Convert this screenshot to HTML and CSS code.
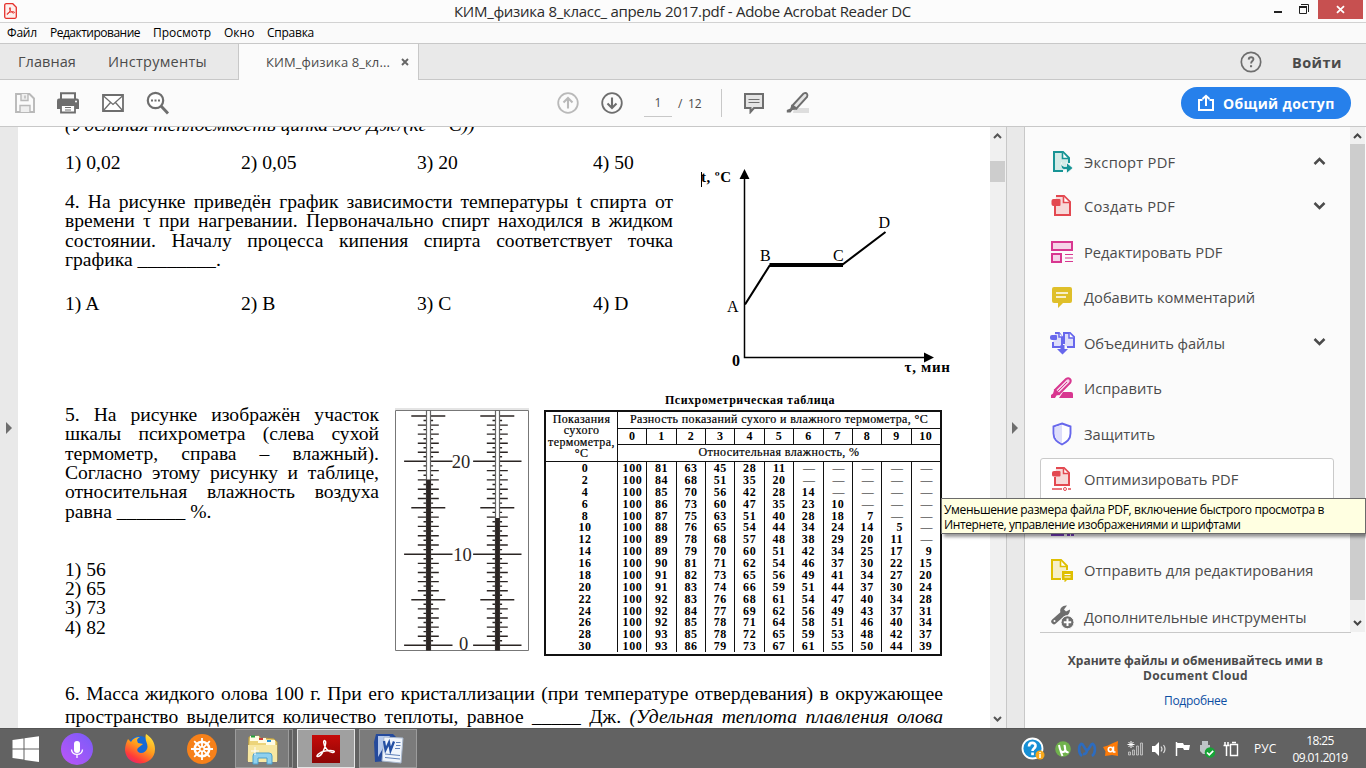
FILE: index.html
```html
<!DOCTYPE html>
<html lang="ru">
<head>
<meta charset="utf-8">
<title>КИМ_физика 8_класс_ апрель 2017.pdf - Adobe Acrobat Reader DC</title>
<link rel="stylesheet" href="styles.css">
</head>
<body>
<div class="screen">
  <header class="titlebar">
    <svg class="app-icon" width="13" height="16" viewBox="0 0 13 16"><path d="M2.500.7h6.300l3.500 3.500v9.600a1.500 1.500 0 0 1-1.500 1.500H2.200A1.500 1.500 0 0 1 .7 13.800V2.200A1.500 1.500 0 0 1 2.500.7z" fill="#fdf0ee" stroke="#e5322d" stroke-width="1.300"/><path d="M3 11.300c-.8-.8 3-2.600 6-2.600 2.500 0 1.500 1.800 0 1.300-2-.8-4-4-3.300-5.200.8-.8 1.300.7.300 3C5.200 9.500 4 11.800 3 11.300z" fill="none" stroke="#e5322d" stroke-width="1"/></svg>
    <span class="title">КИМ_физика 8_класс_ апрель 2017.pdf - Adobe Acrobat Reader DC</span>
    <div class="window-buttons">
      <svg width="8" height="19" viewBox="0 0 8 19"><path d="M0 12h8" stroke="#222" stroke-width="2"/></svg>
      <svg width="11" height="19" viewBox="0 0 11 19"><path d="M.5 6.500h7v7h-7z" fill="none" stroke="#222"/><path d="M0 7h8" stroke="#222" stroke-width="2"/><path d="M2 4.500h7.500V12" fill="none" stroke="#222"/></svg>
      <div class="close"><svg width="9" height="9" viewBox="0 0 9 9"><path d="M1 1.200l7 6.600M8 1.200L1 7.800" stroke="#fff" stroke-width="1.800"/></svg></div>
    </div>
  </header>
  <nav class="menubar">
    <span class="m1">Файл</span><span class="m2">Редактирование</span><span class="m3">Просмотр</span><span class="m4">Окно</span><span class="m5">Справка</span>
  </nav>
  <nav class="tabs">
    <span class="tab-home">Главная</span>
    <span class="tab-tools">Инструменты</span>
    <div class="tab-active"><span>КИМ_физика 8_кл...</span><svg width="8" height="8" viewBox="0 0 8 8"><path d="M1 1l6 6M7 1L1 7" stroke="#666" stroke-width="1.900"/></svg></div>
    <div class="tabs-right">
      <svg width="22" height="22" viewBox="0 0 22 22"><circle cx="11" cy="11" r="9.700" fill="none" stroke="#6e6e6e" stroke-width="1.700"/><path d="M8.700 8.600c.1-3.200 5-3 4.700-.2-.2 1.600-2.300 1.800-2.300 4" fill="none" stroke="#6e6e6e" stroke-width="1.900"/><path d="M10 14.200h2.100v2H10z" fill="#6e6e6e"/></svg>
      <b>Войти</b>
    </div>
  </nav>
  <div class="toolbar">
    <div class="tools-left">
      <svg width="22" height="22" viewBox="0 0 22 22"><path d="M2 2h13.500L20 6.500V20H2z" fill="none" stroke="#b9b9b9" stroke-width="1.900"/><path d="M7 2v6.500h7V2M6 20v-6.500h10V20" fill="#efefef" stroke="#b9b9b9" stroke-width="1.400"/><path d="M11 3.500v3" stroke="#b9b9b9" stroke-width="1.500"/></svg>
      <svg width="24" height="22" viewBox="0 0 24 22"><path d="M5 7V1.300h14V7" fill="none" stroke="#6e6e6e" stroke-width="2"/><path d="M3 6.500h18q2 0 2 2V17H1V8.500q0-2 2-2z" fill="#6e6e6e"/><circle cx="20" cy="9.500" r="1" fill="#fff"/><path d="M5 13h14v7.500H5z" fill="#fff" stroke="#6e6e6e" stroke-width="1.800"/><path d="M9 15.500h6M9 18h6" stroke="#6e6e6e"/></svg>
      <svg width="22" height="22" viewBox="0 0 22 22"><path d="M1 3h20v16H1z" fill="#fff" stroke="#6e6e6e" stroke-width="1.800"/><path d="M1 3.500l10 9 10-9M1.500 18.500l7-8M20.500 18.500l-7-8" fill="none" stroke="#6e6e6e" stroke-width="1.300"/></svg>
      <svg width="24" height="24" viewBox="0 0 24 24"><circle cx="9.500" cy="9.500" r="7.700" fill="#fff" stroke="#6e6e6e" stroke-width="2.200"/><path d="M15 15l7 7.500" stroke="#6e6e6e" stroke-width="2.900"/><path d="M5 9.500h9" stroke="#6e6e6e" stroke-width="1.900" stroke-dasharray="2 1.500"/></svg>
    </div>
    <div class="tools-mid">
      <svg width="22" height="22" viewBox="0 0 22 22"><circle cx="11" cy="11" r="9.800" fill="none" stroke="#b9b9b9" stroke-width="1.800"/><path d="M11 16.500V6M6.500 10.500L11 6l4.500 4.500" fill="none" stroke="#b9b9b9" stroke-width="2.100"/></svg>
      <svg width="22" height="22" viewBox="0 0 22 22"><circle cx="11" cy="11" r="9.800" fill="none" stroke="#6e6e6e" stroke-width="1.800"/><path d="M11 5.500V16M6.500 11.500L11 16l4.500-4.500" fill="none" stroke="#6e6e6e" stroke-width="2.100"/></svg>
      <span class="page-no">1</span><span class="page-total">/&nbsp; 12</span>
      <i class="divider"></i>
      <svg width="22" height="22" viewBox="0 0 22 22"><path d="M2 2h18v14h-9l-3.500 4v-4H2z" fill="#e4e4e4" stroke="#6e6e6e" stroke-width="2"/><path d="M5.500 7.500h11M5.500 10.500h11" stroke="#6e6e6e"/></svg>
      <svg width="24" height="24" viewBox="0 0 24 24"><path d="M8 17h15v5H7z" fill="#dedede"/><path d="M6.500 14.500L17.500 2.500c3-1.500 4.800.5 3.500 3.500L10.500 17.500z" fill="#e4e4e4" stroke="#6e6e6e" stroke-width="1.900"/><path d="M5.500 13.500l6 5-5 .5-2 2.500H.8v-2.500l3.500-1.500z" fill="#6e6e6e"/></svg>
    </div>
    <button class="share"><svg width="18" height="18" viewBox="0 0 18 18"><path d="M5.500 6H2v10h14V6h-3.500M9 12V2M5.500 5L9 1.800 12.500 5" fill="none" stroke="#fff" stroke-width="2"/></svg>Общий доступ</button>
  </div>

  <main class="workspace">
    <div class="left-rail"><i class="tri"></i></div>
    <article class="page">
      <div class="cut"><i>(Удельная теплоёмкость цинка 380 Дж/(кг · °С))</i></div>
      <section class="part-a">
        <div class="text-a">
          <div class="answers"><span>1) 0,02</span><span>2) 0,05</span><span>3) 20</span><span>4) 50</span></div>
          <div class="q4">
            <p>4. На рисунке приведён график зависимости температуры t спирта от</p>
            <p>времени τ при нагревании. Первоначально спирт находился в жидком</p>
            <p>состоянии. Началу процесса кипения спирта соответствует точка</p>
            <p class="last">графика ________.</p>
          </div>
          <div class="answers"><span>1) A</span><span>2) B</span><span>3) C</span><span>4) D</span></div>
        </div>
        <svg class="graph" width="265" height="225" viewBox="695 160 265 225">
          <path d="M744.500 176V357.500H926" fill="none" stroke="#000" stroke-width="1.500"/>
          <path d="M744.500 169l5 10h-10zM934 357.500l-10-5v10z"/>
          <path d="M745 304.500l25-39.500M842 265l43.500-33" fill="none" stroke="#000" stroke-width="2.100"/>
          <path d="M769.500 265H843" stroke="#000" stroke-width="3.800"/>
          <path d="M701.500 172v15" stroke="#000"/>
          <g class="graph-text"><text x="701" y="182" class="bold label-t" textLength="30">t, ºC</text><text x="727" y="312">A</text><text x="760" y="261">B</text><text x="833" y="261">C</text><text x="878.500" y="228">D</text><text x="732" y="366" class="bold">0</text><text x="904.500" y="372" class="bold small" textLength="45.500">τ, мин</text></g>
        </svg>
      </section>
      <section class="part-b">
        <div class="text-b">
          <div class="q5">
            <p>5. На рисунке изображён участок</p>
            <p>шкалы психрометра (слева сухой</p>
            <p>термометр, справа – влажный).</p>
            <p>Согласно этому рисунку и таблице,</p>
            <p>относительная влажность воздуха</p>
            <p class="last">равна _______ %.</p>
          </div>
          <div class="list"><p class="last">1) 56</p><p class="last">2) 65</p><p class="last">3) 73</p><p class="last">4) 82</p></div>
        </div>
        <svg class="thermo" width="135" height="243" viewBox="395 408 135 243">
          <path d="M395 409h134" stroke="#e4e4e4" stroke-width="2"/>
          <path d="M395.500 410.500h133v240h-133z" fill="#fff" stroke="#777"/>
          <path id="ticks" stroke="#2b2523" stroke-width="1.400"/>
          <path d="M426.500 410.500h4v240h-4zM495.500 410.500h4v240h-4z" fill="#fff" stroke="#666" stroke-width="1.200"/>
          <path d="M428.500 479.500V650.500M497.500 518V650.500" stroke="#2b2523" stroke-width="4.600"/>
          <g class="thermo-text"><text x="461" y="467.500">20</text><text x="462.500" y="560.500">10</text><text x="463.500" y="649.500">0</text></g>
        </svg>
        <div class="psychro">
          <b class="caption">Психрометрическая таблица</b>
          <div class="table">
            <div class="row-head">Показания<br>сухого<br>термометра,<br>°C</div>
            <div class="col-head">Разность показаний сухого и влажного термометра, °C</div>
            <div class="diffs" id="diffs"></div>
            <div class="humidity">Относительная влажность, %</div>
            <div class="body" id="cells"></div>
          </div>
        </div>
      </section>
      <section class="q6">
        <p>6. Масса жидкого олова 100 г. При его кристаллизации (при температуре отвердевания) в окружающее</p>
        <p>пространство выделится количество теплоты, равное _____ Дж. <i>(Удельная теплота плавления олова</i></p>
      </section>
    </article>
    <div class="doc-scroll">
      <svg width="9" height="6" viewBox="0 0 9 6"><path d="M1 5l3.500-3.500L8 5" fill="none" stroke="#555" stroke-width="2"/></svg>
      <i></i>
      <svg width="9" height="6" viewBox="0 0 9 6"><path d="M1 1l3.500 3.500L8 1" fill="none" stroke="#555" stroke-width="2"/></svg>
    </div>
    <div class="right-rail"><i class="tri"></i></div>
    <aside class="panel">
      <div class="panel-top">
        <ul class="tool-list">
          <li><svg width="24" height="24" viewBox="0 0 24 24"><path d="M13 21H4V2h9l6 6v5" fill="#d3ebe7" stroke="#179495" stroke-width="2"/><path d="M12.500 2.500V8.500H18" fill="#fff" stroke="#179495" stroke-width="1.600"/><path d="M11.500 12.500c0 3 1.500 4 4 4h1v-4l6.500 5.500-6.500 5.500v-4h-2c-3 0-4-3-3-7z" fill="#179495" stroke="#fbfbfb" stroke-width=".8"/></svg><span class="sp-wide">Экспорт PDF</span><svg class="chev" width="13" height="9" viewBox="0 0 13 9"><path d="M1.500 7l5-5 5 5" fill="none" stroke="#4b4b4b" stroke-width="2.500"/></svg></li>
          <li><svg width="24" height="24" viewBox="0 0 24 24"><path d="M5 12v9h15V8l-6-6H6" fill="#f7d8d8" stroke="#e34850" stroke-width="2"/><path d="M13.500 2.500V8.500h6" fill="#fff" stroke="#e34850" stroke-width="1.600"/><path d="M3.500 5h6q1 0 1 1v5q0 1-1 1h-6q-2 0-2-2V7q0-2 2-2z" fill="#e34850"/></svg><span class="sp-wide">Создать PDF</span><svg class="chev" width="13" height="9" viewBox="0 0 13 9"><path d="M1.500 2l5 5 5-5" fill="none" stroke="#4b4b4b" stroke-width="2.500"/></svg></li>
          <li><svg width="24" height="24" viewBox="0 0 24 24"><path d="M2 2h20v8H2zM2 14h9v8H2z" fill="#f6d3e8" stroke="#d83790" stroke-width="2"/><path d="M15 14.500h8M15 18h8M15 21.500h8" stroke="#d83790" stroke-width="1.100"/></svg><span>Редактировать PDF</span></li>
          <li><svg width="24" height="24" viewBox="0 0 24 24"><path d="M4 2h16q2 0 2 2v12q0 2-2 2h-7l-5 5v-5H4q-2 0-2-2V4q0-2 2-2z" fill="#dfbf2a"/><path d="M6 8h12M6 12h10" stroke="#fff" stroke-width="1.400"/></svg><span>Добавить комментарий</span></li>
          <li><svg width="26" height="24" viewBox="0 0 26 24"><path d="M3 11v5h6V16H12V6L9 2H5M14 13V2h6l4 4v10h-7" fill="#dedefa" stroke="#6767ec" stroke-width="2"/><path d="M9 2v4h4M19 2v5h5" fill="#fff" stroke="#6767ec" stroke-width="1.500"/><path d="M2 4h4q1 0 1 1v3q0 1-1 1H2Q0 9 0 7V6q0-2 2-2zM10.500 14h4v4h3.500l-5.500 5.500L7 18h3.500z" fill="#6767ec"/></svg><span class="sp-tight">Объединить файлы</span><svg class="chev" width="13" height="9" viewBox="0 0 13 9"><path d="M1.500 2l5 5 5-5" fill="none" stroke="#4b4b4b" stroke-width="2.500"/></svg></li>
          <li><svg width="24" height="24" viewBox="0 0 24 24"><path d="M13 16h8q2 0 2 2v4H9z" fill="#d83790"/><path d="M5 14L16 3c3-2 6 .5 4 4L9 18z" fill="#f6d3e8" stroke="#d83790" stroke-width="2"/><path d="M8 15L17 6" stroke="#d83790"/><path d="M4.500 13l6 5.500-4 1L5 22H1v-3l2-1.500z" fill="#d83790"/></svg><span>Исправить</span></li>
          <li><svg width="24" height="24" viewBox="0 0 24 24"><path d="M12 1.500l8.500 3v7c0 6-4 8.500-8.500 11-4.500-2.500-8.500-5-8.500-11v-7z" fill="#fff" stroke="#6767ec" stroke-width="1.900"/><path d="M12 3v18c-4-2-7-4-7-9V5z" fill="#dedefa"/></svg><span>Защитить</span></li>
          <li class="hovered"><svg width="24" height="24" viewBox="0 0 24 24"><path d="M5 10v8h14V6l-5-5H6" fill="#f7d8d8" stroke="#e34850" stroke-width="2"/><path d="M13.500 1.500v5h5" fill="#fff" stroke="#e34850" stroke-width="1.500"/><path d="M4 4h5.500q1 0 1 1v3.500q0 1-1 1H4q-2 0-2-1.500V5.500Q2 4 4 4z" fill="#e34850"/><path d="M2 22h10M18 22h3" stroke="#e34850" stroke-width="1.600"/><circle cx="15" cy="22" r="1.500" fill="none" stroke="#e34850"/></svg><span>Оптимизировать PDF</span></li>
          <li><svg width="24" height="24" viewBox="0 0 24 24"><path d="M1 20h13v3H1zM17 20h3v3h-3zM21 20h3v3h-3z" fill="#7c3fc4"/></svg></li>
          <li><svg width="24" height="24" viewBox="0 0 24 24"><path d="M11 21H2V2h9l6 6v4" fill="#f6efc8" stroke="#dfbf00" stroke-width="2"/><path d="M10.500 2.500V8.500H16" fill="#fff" stroke="#dfbf00" stroke-width="1.600"/><path d="M12 13h11v9h-6l-2.500 2.500V22H12z" fill="#dfbf00"/><path d="M14.500 16.500h6M14.500 19h6" stroke="#fff" stroke-width="1.200"/></svg><span>Отправить для редактирования</span></li>
          <li><svg width="26" height="24" viewBox="0 0 26 24"><path d="M4 16.500L12.500 9" stroke="#6e6e6e" stroke-width="5.500" stroke-linecap="round"/><path d="M17 .5c-4-.5-8 2.500-6.500 7l3 3c4 1 6.500-2 6.500-6l-4 2-2-2z" fill="#6e6e6e"/><circle cx="4.500" cy="16" r="1" fill="#fff"/><circle cx="17.500" cy="17.300" r="6.500" fill="#6e6e6e" stroke="#fbfbfb" stroke-width="1"/><path d="M17.500 13.600v7.400M13.800 17.300h7.400" stroke="#fff" stroke-width="2"/></svg><span class="sp-last">Дополнительные инструменты</span></li>
        </ul>
        <div class="panel-scroll">
          <svg width="9" height="6" viewBox="0 0 9 6"><path d="M1 5l3.500-3.500L8 5" fill="none" stroke="#444" stroke-width="2"/></svg>
          <i></i>
          <svg width="9" height="6" viewBox="0 0 9 6"><path d="M1 1l3.500 3.500L8 1" fill="none" stroke="#444" stroke-width="2"/></svg>
        </div>
      </div>
      <div class="cloud">
        <b>Храните файлы и обменивайтесь ими в</b><b class="cloud-name">Document Cloud</b>
        <a>Подробнее</a>
      </div>
    </aside>
  </main>

  <footer class="taskbar">
    <svg class="start" width="28" height="26" viewBox="0 0 28 26"><path d="M.500 4l11-1.500V12.500H.500zM12.500 2.300L27 .3v12.200H12.500zM.500 13.500h11v10L.500 22zM12.500 13.500H27V26l-14.500-2z" fill="#fff"/></svg>
    <svg class="mic" width="32" height="32" viewBox="0 0 32 32"><defs><linearGradient id="mg" x2="1" y1="1" y2="0"><stop stop-color="#bd55f8"/><stop offset="1" stop-color="#775cf8"/></linearGradient></defs><circle cx="16" cy="16" r="16" fill="url(#mg)"/><rect x="13" y="8" width="6" height="12" rx="3" fill="#fff"/><path d="M10.500 16.500c.5 6.500 10.500 6.500 11 0M16 21.500v3.500" fill="none" stroke="#fff" stroke-width="1.300"/></svg>
    <svg class="fox" width="32" height="32" viewBox="0 0 32 32"><defs><linearGradient id="fg" x1=".8" x2=".2" y2="1"><stop stop-color="#ffe43a"/><stop offset=".45" stop-color="#ff9a1c"/><stop offset=".8" stop-color="#ff3a3a"/><stop offset="1" stop-color="#e02378"/></linearGradient></defs><circle cx="15.500" cy="15" r="12" fill="#176ad5"/><path d="M4 6l3 3c2-4 6-5 9-5-4 2-3 4-2 6l5 1-5 4c-2 2 0 5 3 5 3 0 5-2 6-4 2-5-3-8-1-15 5 3 9 8 9 15C31 35 2 35 1 17c0-4 1-7 3-11z" fill="url(#fg)"/></svg>
    <svg class="wheel" width="30" height="30" viewBox="0 0 30 30"><circle cx="15" cy="15" r="15" fill="#f7811a"/><g fill="none" stroke="#fff"><circle cx="15" cy="15" r="7.300" stroke-width="2.500"/><path d="M15 4v22M4 15h22M7.200 7.200l15.600 15.600M22.800 7.200L7.200 22.800" stroke-width="1.800"/></g><circle cx="15" cy="15" r="3" fill="#fff"/><circle cx="15" cy="15" r="1.500" fill="#f7811a"/></svg>
    <div class="task explorer"><svg width="34" height="32" viewBox="0 0 34 32"><path d="M4 4l10-1 2 3 3-1 10 1 3 3v19H3z" fill="#ecd47b" stroke="#bd9f43"/><path d="M5 3h9v5H5zM13 5h8v5h-8zM21 7h9v5h-9z" fill="#fffbe3"/><path d="M6 2.500h4v2H6z" fill="#24a33b"/><path d="M14 5h4v2h-4z" fill="#d03b32"/><path d="M22 7h4v2h-4z" fill="#2895d8"/><path d="M3 12h29v17H3z" fill="#f7e7a2"/><path d="M8 31V23q0-3 3-3h13q3 0 3 3v8h-5v-6H13v6z" fill="#8fd0ee" stroke="#4b9fcc"/><path d="M10 14v8M6 18h8" stroke="#fff"/></svg></div>
    <div class="stack"></div>
    <div class="task acro"><svg width="28" height="28" viewBox="0 0 28 28"><defs><linearGradient id="ag" x2="0" y2="1"><stop stop-color="#c60b09"/><stop offset="1" stop-color="#8c0505"/></linearGradient></defs><path d="M0 0h28v28H0z" fill="url(#ag)"/><path d="M6 21.500C3 22 7 17 13 16c9-1.800 11 1 8 1.500-4 .5-9-5-9.300-10-.1-3 2.300-2.200 2 .5C13.400 12 10 21 6 21.500z" fill="none" stroke="#fff" stroke-width="1.500"/></svg></div>
    <div class="task word"><svg width="32" height="32" viewBox="0 0 32 32"><path d="M4 1h17l4 4v22l-22 2-1-20z" fill="#254a9c"/><path d="M6 3h12L6 24z" fill="#b5c9ed"/><path d="M12 4l19 1-2 25-19-2z" fill="#f0f5fc" stroke="#a8b7cd"/><path d="M12 8l1.500 9L17 9.500l1.500 8L22 8.500" fill="none" stroke="#2450a4" stroke-width="2.300"/><path d="M24 9.500h4.500M24 12.500h4.500M23 15.500h5M13 21l15 1.500M13 24.500l15 1.500" stroke="#5f80b8"/></svg></div>
    <div class="tray">
      <svg class="help" width="24" height="24" viewBox="0 0 24 24"><circle cx="11.500" cy="11.500" r="10" fill="#168fd5" stroke="#fff" stroke-width="1.800"/><path d="M8 9.500c0-5 7-4.500 6.500-.5-.3 2.500-3 2.500-3 5" fill="none" stroke="#fff" stroke-width="2.600"/><path d="M10.200 15.500h2.700v2.700h-2.700z" fill="#fff"/><circle cx="19" cy="18" r="4.500" fill="#f6a81c"/><path d="M19 17v4M19 15v1.200" stroke="#fff" stroke-width="1.500"/></svg>
      <svg width="24" height="24" viewBox="0 0 24 24"><circle cx="12" cy="12" r="7.800" fill="#70b24d"/><path d="M8 8c1 5 1.500 7 4 7 3 0 2.500-4 1.500-7 .5 5 1 8 4 7M9.500 14l2 5" fill="none" stroke="#fff" stroke-width="2"/></svg>
      <svg width="24" height="24" viewBox="0 0 24 24"><path d="M7 19C3 16 3.500 9 6 7c2.500-1 3 5 6 6.500C15 12 15.500 6 18 7c2.500 2 3 9-1 12M8 17c2.500.5 3.500-1 4-3" fill="none" stroke="#2d6cbf" stroke-width="2.600"/></svg>
      <svg width="24" height="24" viewBox="0 0 24 24"><path d="M14 6l5-2-.5 6 .5 9-6-1-7 1 .5-4.500L4 10l5-1.500z" fill="#ff7b08"/><circle cx="11.500" cy="12.500" r="2.200" fill="none" stroke="#fff" stroke-width="1.600"/><path d="M14.500 9.500v5.500h2" fill="none" stroke="#fff" stroke-width="1.500"/></svg>
      <svg width="24" height="24" viewBox="0 0 24 24"><path d="M5.500 18v-3h2v3zM9.500 18v-5h2v5zM13.500 18V9h2v9zM17.500 18V6h2v12z" fill="#777" stroke="#ccc" stroke-width=".8"/><path d="M8 4v7M4.500 7.500h7M5.500 5l5 5M10.500 5l-5 5" stroke="#fff"/></svg>
      <svg width="24" height="24" viewBox="0 0 24 24"><path d="M5 9h3l4-4v14l-4-4H5z" fill="#fff"/><path d="M14 9.500q2 2.500 0 5M16.500 8q3 4 0 8" fill="none" stroke="#ddd" stroke-width="1.200"/></svg>
      <svg width="24" height="24" viewBox="0 0 24 24"><path d="M5.500 5v14" stroke="#fff" stroke-width="1.500"/><path d="M6 6h6l1 2h6l-1 5h-5l-1-2H6z" fill="#fff"/></svg>
      <svg width="24" height="24" viewBox="0 0 24 24"><path d="M7 4h6v4h2v6l-2 3H8l-3-3V8h2z" fill="#bfc4c7"/><circle cx="15" cy="15.500" r="5.300" fill="#17a337"/><path d="M12 15.500l2.300 2.300 3.900-4" fill="none" stroke="#fff" stroke-width="1.700"/></svg>
      <svg width="24" height="24" viewBox="0 0 24 24"><path d="M11.500 7.500h7v11h-7zM13 5.500h4" fill="none" stroke="#fff" stroke-width="1.400"/><path d="M6 5v3M9 5v3M4.500 8.500h6M7.500 9v10" stroke="#fff" stroke-width="1.500"/></svg>
      <span class="lang">РУС</span>
      <div class="clock"><span>18:25</span><span>09.01.2019</span></div>
    </div>
  </footer>

  <div class="tooltip"><span class="tip-1">Уменьшение размера файла PDF, включение быстрого просмотра в</span><span class="tip-2">Интернете, управление изображениями и шрифтами</span></div>
</div>
<script src="script.js"></script>
</body>
</html>
```
FILE: styles.css
```css
* { box-sizing: border-box; }
body { margin: 0; overflow: hidden; font-family: "Open Sans", "Noto Sans", sans-serif; }
p, ul { margin: 0; padding: 0; list-style: none; }
svg { display: block; flex: none; }
.screen { position: relative; width: 1366px; height: 768px; display: flex; flex-direction: column; background: #fafafa; overflow: hidden; }

.titlebar { height: 23px; flex: none; display: flex; background: #fcfcfc; border-bottom: 1px solid #d2d2d2; }
.app-icon { margin: 3px 0 0 4px; }
.title { margin-left: 437px; width: 600px; font-size: 15px; line-height: 23px; letter-spacing: -0.293px; white-space: nowrap; color: #2b2b2b; }
.window-buttons { margin-left: auto; display: flex; height: 19px; }
.window-buttons svg + svg { margin-left: 17px; }
.close { width: 45px; margin: 0 3px 0 8px; background: #c75050; display: flex; align-items: center; justify-content: center; }

.menubar { height: 21px; flex: none; display: flex; border-bottom: 1px solid #c8c8c8; padding-left: 7px; gap: 14px; font-size: 12px; line-height: 20px; color: #000; white-space: nowrap; }
.m1 { letter-spacing: -0.18px; width: 29px; }
.m2 { letter-spacing: -0.5px; width: 89px; }
.m3 { width: 57px; }
.m4 { width: 29px; }
.m5 { letter-spacing: -0.25px; }

.tabs { height: 36px; flex: none; display: flex; background: #e9e9e9; box-shadow: inset 0 -1px #c8c8c8; color: #4b4b4b; font-size: 14.500px; line-height: 35px; white-space: nowrap; }
.tab-home { margin-left: 18px; width: 90px; letter-spacing: .07px; }
.tab-tools { width: 130px; letter-spacing: .26px; }
.tab-active { width: 181px; padding-left: 27px; display: flex; align-items: center; background: #fbfbfb; border: solid #c8c8c8; border-width: 0 1px; font-size: 13px; letter-spacing: .1px; }
.tab-active span { width: 135px; }
.tabs-right { margin-left: auto; width: 126px; display: flex; align-items: center; gap: 30px; letter-spacing: .45px; }

.toolbar { height: 47px; flex: none; display: flex; align-items: center; border-bottom: 1px solid #c8c8c8; background: #fbfbfb; }
.tools-left { width: 556px; padding-left: 14px; display: flex; align-items: center; gap: 22px; }
.tools-left svg:first-child { margin-right: -2px; }
.tools-mid { width: 625px; display: flex; align-items: center; font-size: 12px; color: #4b4b4b; }
.tools-mid svg:first-child { margin: 0 22px 0 1px; }
.page-no { width: 28px; height: 28px; margin: 0 6px 0 21px; line-height: 27px; text-align: center; border-bottom: 1px solid #c8c8c8; }
.page-total { width: 43px; letter-spacing: -.2px; }
.divider { width: 1px; height: 28px; margin-right: 21px; background: #c8c8c8; }
.divider + svg { margin-right: 21px; }
.share { width: 170px; height: 32px; padding: 0 0 0 16px; display: flex; align-items: center; gap: 8px; border: 0; border-radius: 16px; background: #2680eb; color: #fff; font: bold 14px "Open Sans", sans-serif; letter-spacing: .35px; white-space: nowrap; }

.workspace { height: 601px; flex: none; display: flex; overflow: hidden; }
.left-rail { width: 18px; background: #e9e9e9; display: flex; align-items: center; padding-left: 6px; }
.tri { border: solid transparent; border-width: 6px 0 6px 6px; border-left-color: #6e6e6e; }
.right-rail { width: 19px; border: solid #c8c8c8; border-width: 0 1px; background: #e9e9e9; display: flex; align-items: center; padding-left: 5px; }

.page { width: 972px; padding-left: 47px; background: #fff; color: #000; font: 19.6px/19.4px "Liberation Serif", serif; overflow: hidden; white-space: nowrap; }
.page p { text-align-last: justify; }
.page p.last { text-align-last: left; }
.cut { height: 26px; display: flex; align-items: flex-start; overflow: hidden; letter-spacing: -.03px; }
.cut i { margin-top: -12.500px; }
.part-a { height: 251px; display: grid; grid-template-columns: 630px 1fr; }
.text-a { width: 608px; }
.answers { display: grid; grid-template-columns: repeat(4, 176px); }
.q4 { margin: 19.600px 0 24px; }
.graph { margin-top: 7px; }
.graph-text { font-size: 16px; }
.graph-text .label-t { font-size: 15px; }
.graph-text .small { font-size: 15px; }
.bold { font-weight: bold; }
.part-b { height: 279px; display: grid; grid-template-columns: 330px 149px 398px; }
.text-b { width: 314px; padding-top: .800px; }
.list { margin-top: 38.400px; }
.thermo { margin-top: 4px; }
.thermo-text { font-size: 18.500px; text-anchor: middle; fill: #2b2523; }
.q6 { width: 878px; padding-top: .400px; line-height: 22.300px; }

.psychro { font-size: 12px; text-align: center; }
.caption { display: block; padding-left: 14px; height: 7px; line-height: 0; margin-top: -4px; letter-spacing: .51px; }
.table { display: grid; grid-template: 17px 16px 17px 192px / 71px 323px; border: 2px solid #111; width: 398px; height: 246px; margin-top: 3px; line-height: 13px; }
.row-head { grid-row: 1 / 4; border-bottom: 1px solid #111; letter-spacing: .400px; line-height: 11.400px; padding-top: 2px; -webkit-text-stroke: .2px #000; white-space: nowrap; }
.col-head { border: solid #111; border-width: 0 0 1px 1px; letter-spacing: .370px; line-height: 14px; -webkit-text-stroke: .2px #000; }
.diffs { grid-column: 2; border-bottom: 1px solid #111; display: grid; grid-template-columns: repeat(11, 29.360px); font-weight: bold; }
.diffs span { border-left: 1px solid #111; line-height: 15px; letter-spacing: .4px; }
.humidity { grid-column: 2; border: solid #111; border-width: 0 0 1px 1px; letter-spacing: .400px; line-height: 14px; -webkit-text-stroke: .2px #000; }
.body { grid-column: 1 / 3; display: grid; grid-template-columns: 71px repeat(11, 29.360px); grid-auto-rows: 11.890px; font-weight: bold; letter-spacing: .6px; }
.body span { border-left: 1px solid #111; line-height: 12.500px; text-align: right; padding-right: 7.500px; }
.body .t { border-left: 0; text-align: center; padding-right: 0; padding-left: 7px; }
.body .full { padding-right: 4px; }
.body .dash { font-weight: normal; letter-spacing: 0; }

.doc-scroll { width: 16px; padding: 6px 4px 6px 3px; background: #f0f0f0; display: flex; flex-direction: column; }
.doc-scroll i { width: 15px; height: 21px; margin: 22px 0 auto -3px; background: #cdcdcd; }

.panel { width: 341px; display: flex; flex-direction: column; background: #fbfbfb; }
.panel-top { height: 505px; display: flex; padding-left: 15px; }
.tool-list { width: 310px; padding-top: 12.500px; overflow: hidden; }
.tool-list li { height: 45.500px; width: 294px; padding: 0 0 3.500px 10px; display: grid; grid-template-columns: 34px 1fr 21px; align-items: center; font-size: 14.700px; color: #4b4b4b; white-space: nowrap; }
.tool-list li:first-child, .tool-list li:last-child { padding-bottom: 0; }
.tool-list li.hovered { padding-left: 9px; background: #fff; border: 1px solid #cacaca; border-radius: 3px; }
.sp-wide { letter-spacing: .25px; }
.sp-tight { letter-spacing: -.07px; }
.sp-last { letter-spacing: -.07px; }
.chev { margin-top: -2px; }
.panel-scroll { width: 15px; padding: 6px 3px; display: flex; flex-direction: column; background: #f0f0f0; }
.panel-scroll i { flex: 1; width: 15px; margin: 5px 0 20px -3px; background: #cdcdcd; }
.cloud { margin-left: 15px; width: 311px; padding-top: 20px; border-top: 1px solid #c8c8c8; text-align: center; font-size: 12px; line-height: 15px; color: #4b4b4b; white-space: nowrap; }
.cloud b { display: block; }
.cloud-name { letter-spacing: .38px; }
.cloud a { display: block; margin-top: 10px; letter-spacing: -.29px; color: #0d4ea3; }

.taskbar { height: 40px; flex: none; display: flex; align-items: center; background: #626262; border-top: 1px solid #555; }
.start { margin-left: 12px; }
.mic { margin-left: 21px; }
.fox { margin-left: 31px; }
.wheel { margin-left: 31px; }
.task { height: 39px; width: 58px; border: 1px solid #9c9c9c; display: flex; align-items: center; justify-content: center; background: #7b7b7b; }
.explorer { width: 54px; margin-left: 18px; }
.stack { width: 4px; height: 39px; border: solid #929292; border-width: 1px 1px 1px 0; }
.acro { margin-left: 4px; border-color: #e4e4e4; background: #a0a0a0; }
.word { margin-left: 4px; }
.tray { margin-left: auto; display: flex; align-items: center; color: #fff; font-size: 12px; }
.help { margin-right: 6px; }
.lang { margin-left: 11px; width: 38px; }
.clock { width: 56px; margin-right: 18px; text-align: center; line-height: 17px; letter-spacing: -.6px; display: flex; flex-direction: column; }

.tooltip { position: absolute; left: 941px; top: 498px; width: 425px; height: 36px; padding: 3px 0 0 2px; background: #ffffe1; border: 1px solid #6b6b6b; box-shadow: 3px 3px 3px rgba(0,0,0,.4); font-size: 12px; line-height: 15px; color: #000; white-space: nowrap; }
.tooltip span { display: block; }
.tip-1 { letter-spacing: -.345px; }
.tip-2 { letter-spacing: -.4px; }
```
FILE: script.js
```js
// Relative humidity by dry-bulb temperature; missing entries are drawn as dashes.
const humidity = [
  [0, 100, 81, 63, 45, 28, 11],
  [2, 100, 84, 68, 51, 35, 20],
  [4, 100, 85, 70, 56, 42, 28, 14],
  [6, 100, 86, 73, 60, 47, 35, 23, 10],
  [8, 100, 87, 75, 63, 51, 40, 28, 18, 7],
  [10, 100, 88, 76, 65, 54, 44, 34, 24, 14, 5],
  [12, 100, 89, 78, 68, 57, 48, 38, 29, 20, 11],
  [14, 100, 89, 79, 70, 60, 51, 42, 34, 25, 17, 9],
  [16, 100, 90, 81, 71, 62, 54, 46, 37, 30, 22, 15],
  [18, 100, 91, 82, 73, 65, 56, 49, 41, 34, 27, 20],
  [20, 100, 91, 83, 74, 66, 59, 51, 44, 37, 30, 24],
  [22, 100, 92, 83, 76, 68, 61, 54, 47, 40, 34, 28],
  [24, 100, 92, 84, 77, 69, 62, 56, 49, 43, 37, 31],
  [26, 100, 92, 85, 78, 71, 64, 58, 51, 46, 40, 34],
  [28, 100, 93, 85, 78, 72, 65, 59, 53, 48, 42, 37],
  [30, 100, 93, 86, 79, 73, 67, 61, 55, 50, 44, 39]
];
function addCell(parent, text, cls) {
  const s = document.createElement('span');
  s.textContent = text;
  if (cls) s.className = cls;
  parent.append(s);
}
const diffs = document.getElementById('diffs');
for (let i = 0; i <= 10; i++) addCell(diffs, i);
const cells = document.getElementById('cells');
for (const row of humidity) {
  for (let c = 0; c < 12; c++) {
    if (row[c] === undefined) addCell(cells, '—', 'dash');
    else addCell(cells, row[c], c === 0 ? 't' : c === 1 ? 'full' : '');
  }
}

// Thermometer scale: a tick every half degree from 0 to 25.
let d = '';
for (let i = 0; i <= 50; i++) {
  const v = i / 2;
  const y = v <= 10 ? 645.3 - v * 9.1 : v <= 20 ? 554.3 - (v - 10) * 9.3 : 461.3 - (v - 20) * 9.06;
  const half = v % 10 === 0 ? 24.2 : v % 5 === 0 ? 17 : v % 1 === 0 ? 10.5 : 4.8;
  for (const x of [428.3, 497.3]) {
    d += `M${x - half} ${y.toFixed(1)}h${half * 2}`;
  }
}
document.getElementById('ticks').setAttribute('d', d);
```
